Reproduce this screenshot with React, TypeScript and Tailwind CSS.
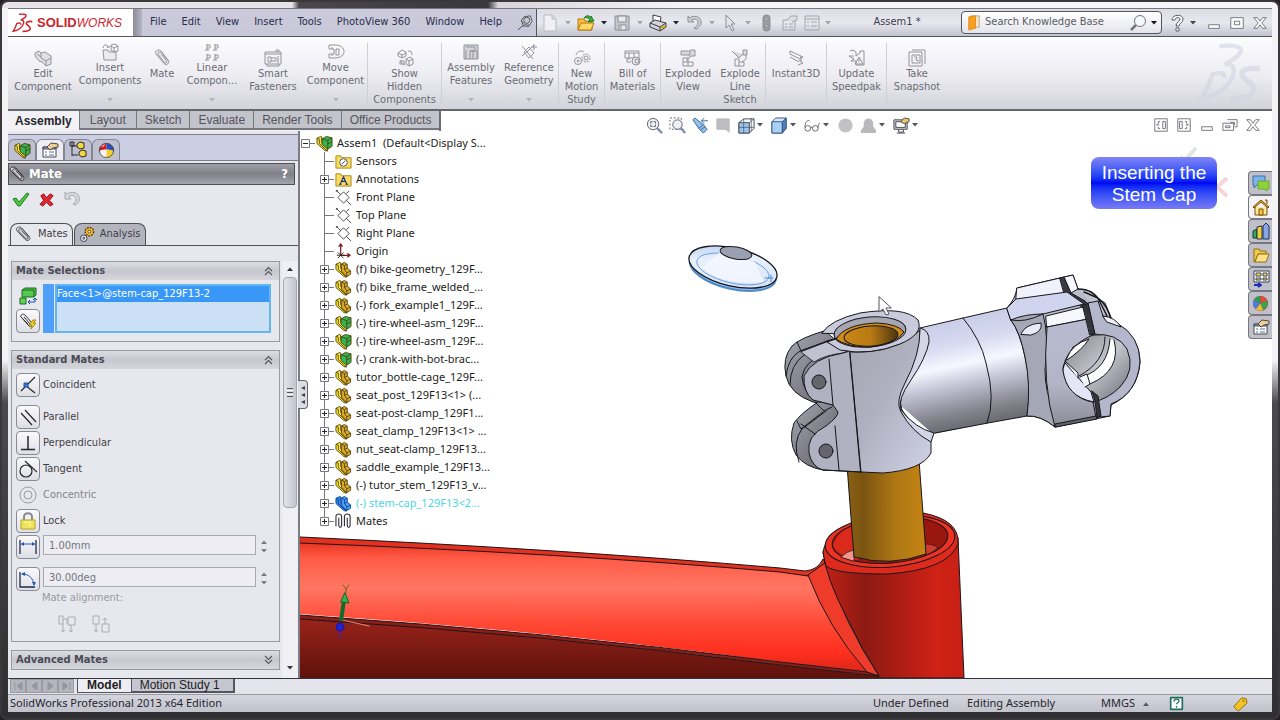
import type { ReactNode } from "react";

type IconProps = { size?: number; children: ReactNode; stroke?: string };

function Ico({ size = 18, stroke = "#8e8e96", children }: IconProps) {
    return (
        <svg width={size} height={size} viewBox="0 0 18 18" fill="none" stroke={stroke} strokeWidth="1" strokeLinejoin="round" aria-hidden="true" className="shrink-0">
            {children}
        </svg>
    );
}

function Caret({ color = "#555560" }: { color?: string }) {
    return (
        <svg width="6" height="4" viewBox="0 0 6 4" aria-hidden="true" className="shrink-0">
            <path d="M0 0h6L3 3.5z" fill={color} />
        </svg>
    );
}

function Clip({ size = 18, color = "#4b4b50" }: { size?: number; color?: string }) {
    return (
        <Ico size={size} stroke={color}>
            <path d="M2 5l9 9.500c2.500 2.500 6.500-.5 4-3.500L7 2C4.500-.5-.5 2.500 2 5z" fill="#d9d9de" />
            <path d="M15 11.500L7.500 3.500C5.500 2 2.500 4 4.500 6l7 7.500c1.500 1 3-.3 2-1.800L7 5" />
        </Ico>
    );
}

function PartIcon({ kind }: { kind: "part" | "asm" | "active" }) {
    const base = kind === "active" ? "#2f8bf2" : "#fbe63c";
    const block = kind === "asm" ? "#35b552" : kind === "active" ? "#4fa2fa" : "#dcab2e";
    const edge = kind === "active" ? "#0a3d8c" : "#4c3b05";
    return (
        <svg width="17" height="17" viewBox="0 0 18 18" fill="none" stroke={edge} strokeWidth=".9" strokeLinejoin="round" aria-hidden="true" className="shrink-0">
            <path d="M1 3.500L5 1.500l1 .5v6l6 6v3L9.500 16.500 1 9z" fill={base} />
            <path d="M1 3.500l2.500 1V9l8.500 8" />
            {kind === "asm" ? (
                <>
                    <path d="M6.500 4L11 1.500 17 3v9l-4.500 3L6.500 10z" fill={block} />
                    <path d="M6.500 4l6 2L17 3M12.500 6v9" />
                    <path d="M12.500 9.500L17 7" />
                </>
            ) : (
                <>
                    <path d="M7 3l3-1.500 3 2v4l3.500 3V14L12.500 16.500 7 11z" fill={block} />
                    <path d="M7 3l3 2 3-1.500M10 5v4l2.500 3.500 4-2M12.500 12.500v4M10 9l3-1.500" />
                </>
            )}
        </svg>
    );
}

function Sphere({ size = 17 }: { size?: number }) {
    return (
        <Ico size={size} stroke="none">
            <circle cx="9" cy="9" r="8" fill="#f5f5f7" />
            <path d="M9 8C4 8 2 9 1 10a8 8 0 0 1 8-9z" fill="#cf1f26" />
            <path d="M9 8V1a8 8 0 0 1 8 9c-2-1-4-2-8-2z" fill="#2c4fc0" />
            <path d="M9 8c4 0 6 1 8 2-1 5-4 7-8 7z" fill="#f0cf2e" />
            <path d="M3 5a8 8 0 0 1 5-3.500L6 5z" fill="#f2a9a0" />
            <circle cx="9" cy="9" r="7.500" stroke="#4b4b53" />
        </Ico>
    );
}

function PropertyIcon() {
    return (
        <Ico size={18} stroke="#4a4a52">
            <path d="M2 6h13v10H2z" fill="#fff" />
            <path d="M2 6h13v2H2z" fill="#7fa4dc" />
            <path d="M4 11h2M4 14h2M8 11h5M8 14h5" stroke="#55739e" />
            <path d="M6 6l4-4 7 1v3l-5 1-3 2z" fill="#f0cd92" />
        </Ico>
    );
}

/* ---------- title bar ---------- */

function DsMark({ className, color }: { className: string; color: string }) {
    return (
        <svg viewBox="0 0 60 56" fill="none" stroke={color} className={className} aria-hidden="true">
            <path d="M20 3c10-1 22-1 20 5-1 4-8 8-15 12 6-1 10 2 8 9-3 11-15 21-30 23 6-8 8-17 11-23 7-2 12-1 11 4" strokeWidth="4" />
            <path d="M58 24c-8-1-17 0-17 5 0 6 13 8 11 16-2 5-10 7-22 7" strokeWidth="5" />
        </svg>
    );
}

const menus = ["File", "Edit", "View", "Insert", "Tools", "PhotoView 360", "Window", "Help"];

const quickTools: { label: string; live?: boolean; icon: ReactNode }[] = [
    { label: "New", icon: <Ico stroke="#b9b9c2"><path d="M3 1h8l4 4v12H3zM11 1v4h4" fill="#f0f0f5" /></Ico> },
    {
        label: "Open",
        live: true,
        icon: (
            <Ico stroke="#b27a10">
                <path d="M1 5h6l1 2h7v9H1z" fill="#f6c03b" />
                <path d="M1 16l3-7h13l-3 7z" fill="#fbd867" />
                <path d="M7 4c3-4 6-2 7 0V2l3 5-6 1 2-2c-1-2-3-3-6-2z" fill="#3eae3a" stroke="#1f7a22" />
            </Ico>
        ),
    },
    { label: "Save", icon: <Ico><path d="M2 2h14v14H2z" fill="#c6c6cf" /><path d="M5 2h8v6H5zM6 11h7v5H6zM8 12v3" fill="#e9e9ef" /></Ico> },
    {
        label: "Print",
        live: true,
        icon: (
            <Ico stroke="#3d3d44">
                <path d="M4 1l8 2-1 6-7-2z" fill="#fff" />
                <path d="M1 9l5-3 11 3v4l-6 4-10-4z" fill="#d2d2da" />
                <path d="M1 9l10 4 6-4M11 13v4" />
                <path d="M12 14l4-2" stroke="#d9b400" strokeWidth="2" />
            </Ico>
        ),
    },
    { label: "Undo", icon: <Ico><path d="M3 2v6h6L6.500 6C10 4 14 6 13 9c0 2-2 4-4 5l2 1c4-2 6-5 5-8-1-5-8-6-11-3z" fill="#d0d0d8" /></Ico> },
    { label: "Select", icon: <Ico><path d="M5 1v13l3-3 3 6 2-1-3-6h4z" fill="#e5e5ec" /></Ico> },
];

const searchBook = (
    <Ico stroke="#9a5c08" size={17}>
        <path d="M5 2h9v12h-5" fill="#f4e6cd" stroke="#b9a57c" />
        <path d="M3 3l7-1v13l-7 2z" fill="#f7a021" stroke="#e08a12" />
    </Ico>
);

function WindowGlyph({ kind }: { kind: "min" | "max" | "restore" | "close" | "left" | "right" }) {
    return (
        <Ico size={16} stroke="#6a6a72">
            {kind === "min" && <path d="M3 11h12v4H3z" fill="#fff" />}
            {kind === "max" && <path d="M2 3h14v12H2zM6 7h6v4H6z" fill="#fff" />}
            {kind === "restore" && <path d="M6 3h11v8h-3M9 6h5v3M1 7h12v8H1zM4 10h5v2H4z" />}
            {kind === "close" && <path d="M2 3h4l3 4 3-4h4l-5 6 5 6h-4l-3-4-3 4H2l5-6z" fill="#fff" />}
            {kind === "left" && <path d="M2 2h14v14H2zM11 5h3v8h-3zM8 5H6v2M8 13H6v-2M4 9h3M4 9l2-2" />}
            {kind === "right" && <path d="M2 2h14v14H2zM4 5h3v8H4zM10 5h2v2M10 13h2v-2M11 9h3M14 9l-2-2" />}
        </Ico>
    );
}

function TitleBar() {
    return (
        <header className="flex h-[29px] shrink-0 items-stretch border-t border-b border-t-[#77777f] border-b-[#55555e] bg-linear-to-b from-[#dcdce6] via-[#e8e8f0] to-[#c4c4d0] text-[11px] text-[#3c3c48]">
            <div className="flex w-[125px] shrink-0 items-center gap-1 bg-white pl-1">
                <DsMark className="h-5 w-[21px]" color="#c9262d" />
                <div className="font-['Liberation_Sans',sans-serif] italic leading-none text-[#c9262d]">
                    <span className="text-[13px] font-bold not-italic">SOLID</span>
                    <span className="text-[12px]">WORKS</span>
                </div>
            </div>
            <div className="w-[9px] shrink-0 bg-linear-to-r from-[#8c8c9a] to-[#b5b5c4]" />
            <nav className="flex w-[395px] shrink-0 items-center gap-[15px] border-r border-[#55555e] bg-linear-to-b from-[#cbcbdb] to-[#c8c8da] pl-2 text-[#2b2b4b]">
                {menus.map((m) => (
                    <button key={m} type="button" className="whitespace-nowrap">
                        {m}
                    </button>
                ))}
                <button type="button" aria-label="Pin menu">
                    <Ico size={16} stroke="#45454d">
                        <path d="M8 2l7-1 2 6-4 6-6-1-2-6z" fill="#e4e4ec" />
                        <path d="M5 6c2 4 5 6 9 5M8 12l-3 1-4 4" />
                        <circle cx="11" cy="6" r="3.500" fill="#c7c7d3" />
                    </Ico>
                </button>
            </nav>
            <div className="flex shrink-0 items-center">
                {quickTools.map((t) => (
                    <button key={t.label} type="button" aria-label={t.label} className="flex w-9 items-center">
                        <span className="flex w-[26px] justify-center">{t.icon}</span>
                        <span className="flex w-[10px] justify-center">
                            <Caret color={t.live ? "#22222a" : "#a2a2ad"} />
                        </span>
                    </button>
                ))}
                <button type="button" aria-label="Rebuild" className="flex w-[26px] justify-center">
                    <Ico><rect x="6" y="1" width="7" height="16" rx="3" fill="#9b9ba6" /><circle cx="9.500" cy="5" r="1.500" fill="#c5c5cd" /><circle cx="9.500" cy="12" r="1.500" fill="#c5c5cd" /></Ico>
                </button>
                <button type="button" aria-label="File properties" className="flex w-[22px] justify-center">
                    <Ico stroke="#a4a4ae"><path d="M2 6h12v10H2zM4 10h2M4 13h2M8 10h4M8 13h4" /><path d="M6 6l4-4h6v4l-5 2" fill="#dcdce4" /></Ico>
                </button>
                <button type="button" aria-label="Options" className="flex w-8 items-center gap-1 pl-[2px]">
                    <Ico stroke="#a4a4ae"><path d="M2 2h14v14H2zM2 5h14M4 8h2M4 12h2M8 8h6M8 12h6" /></Ico>
                    <Caret color="#a2a2ad" />
                </button>
            </div>
            <h1 className="flex grow items-center justify-center">Assem1 *</h1>
            <div className="flex shrink-0 items-center">
                <div className="flex h-[23px] w-[201px] items-center rounded border border-[#55555e] bg-linear-to-b from-white to-[#e4e4ec] pl-1">
                    {searchBook}
                    <input
                        aria-label="Search Knowledge Base"
                        placeholder="Search Knowledge Base"
                        className="ml-[2px] min-w-0 grow bg-transparent outline-none placeholder:text-[#5b5b63]"
                    />
                    <button type="button" aria-label="Search" className="flex items-center gap-1 pr-1">
                        <Ico stroke="#74747e"><path d="M7 11l-5 5" strokeWidth="2.500" /><circle cx="11" cy="7" r="5.500" fill="#f4f8ff" /></Ico>
                        <Caret color="#111" />
                    </button>
                </div>
                <button type="button" aria-label="Help" className="ml-[6px] flex items-center gap-1">
                    <Ico stroke="#5a5a64"><path d="M4 6c0-6 11-6 11-1 0 4-4 4-4 7H8c0-4 4-4 4-7 0-2-5-2-5 1zM8 14h3v3H8z" fill="#fff" /></Ico>
                    <Caret color="#44444c" />
                </button>
                <div className="mr-1 ml-[10px] flex gap-[7px]">
                    <button type="button" aria-label="Minimize"><WindowGlyph kind="min" /></button>
                    <button type="button" aria-label="Maximize"><WindowGlyph kind="max" /></button>
                    <button type="button" aria-label="Close"><WindowGlyph kind="close" /></button>
                </div>
            </div>
        </header>
    );
}

/* ---------- command ribbon ---------- */

type Command = { lines: string[]; width: string; drop?: boolean; sep?: boolean; icon: ReactNode };

const commands: Command[] = [
    { lines: ["Edit", "Component"], width: "w-[70px]", icon: <><path d="M1 4l4-2 2 2 4-1 6 4v8l-5 2-4-4-3-1-4-5z" fill="#e0e0e4" /><path d="M7 4v5l5 3 5-3M12 12v5M3 5l4 3" /></> },
    { lines: ["Insert", "Components"], width: "w-16", drop: true, icon: <><path d="M2 7h5l1 2h7v8H3z" fill="#ececf0" /><path d="M2 5c0-4 5-4 5-1M6 3l1 2 2-2M10 2l4-1 3 2v5l-4 1-3-2zM10 3l3 2 4-2M13 5v4" /></> },
    { lines: ["Mate"], width: "w-10", icon: <><path d="M3 5l8 9.500c2.500 2.500 6.500-.5 4-3.500L8 2C5.500-.5.500 2.500 3 5z" fill="#ececf0" /><path d="M15 11.500L8.500 3.500C6.500 2 3.500 4 5.500 6l6 7.500c1.500 1 3-.3 2-1.800L8 5" /></> },
    { lines: ["Linear", "Compon..."], width: "w-[60px]", drop: true, icon: <path d="M4 1v6M4 11v6M12 1v6M12 11v6M4 2h3v3H4M12 2h3v3h-3M4 12h3v3H4M12 12h3v3h-3M2 7h4M10 7h4M2 17h4M10 17h4" /> },
    { lines: ["Smart", "Fasteners"], width: "w-[62px]", icon: <path d="M1 3h16v12H1zM1 5h16M4 8h3v5H4zM7 9h5v3H7M14 7v7M3 15v2h12v-2M12 3V1h3v2" /> },
    { lines: ["Move", "Component"], width: "w-16", drop: true, sep: true, icon: <path d="M2 2h6c12 0 12 13 0 13H2v-4h5V6H2zM9 6h3v6H9zM5 4v2M5 11v2" /> },
    { lines: ["Show", "Hidden", "Components"], width: "w-[74px]", sep: true, icon: <path d="M2 4l4-3 4 2v4L6 9 2 7zM2 4l4 2 4-2M6 6v3M10 10l4-2 3 2v5l-4 2-3-2zM10 10l3 2 4-2M13 12v5M12 2c3 0 4 1 4 4M5 11c0 3 1 4 4 5M4 12h4v3H4z" /> },
    { lines: ["Assembly", "Features"], width: "w-[58px]", drop: true, icon: <><path d="M2 2h14v14H2z" fill="#d5d5da" /><path d="M4 4h9v4H8v8M8 8h7v8M11 8v8M4 7v9" /></> },
    { lines: ["Reference", "Geometry"], width: "w-[59px]", drop: true, sep: true, icon: <path d="M2 3l11 13M2 13l7-6 5-5M4 9l5-5 5 6-5 5zM14 1v6M11 4h6" /> },
    { lines: ["New", "Motion", "Study"], width: "w-[46px]", sep: true, icon: <><circle cx="5" cy="12" r="3.500" /><circle cx="5" cy="12" r="1" /><circle cx="13" cy="9" r="4" strokeDasharray="2 1" /><circle cx="13" cy="9" r="2" /><path d="M3 6c1-4 6-5 8-3" /></> },
    { lines: ["Bill of", "Materials"], width: "w-14", sep: true, icon: <><path d="M1 2h14v7H1zM1 4h14M5 4v7M10 4v5M3 9v4h4" /><circle cx="12" cy="12" r="4" fill="#e6e6ea" /><circle cx="13" cy="12" r="2" /></> },
    { lines: ["Exploded", "View"], width: "w-[54px]", icon: <><path d="M2 2h9v4H2zM11 1h5v6h-4l-5 5" fill="#dadade" /><path d="M4 16V9h5v4h5v4H4zM4 13h5v4" /></> },
    { lines: ["Explode", "Line", "Sketch"], width: "w-[51px]", sep: true, icon: <><path d="M1 2l7 7 4-4M12 1h4v5h-4z" fill="#dadade" /><path d="M4 16v-6h4v3h5v4H4zM8 13v4M15 6v4l-4 3" /></> },
    { lines: ["Instant3D"], width: "w-[61px]", sep: true, icon: <path d="M3 2l11 5v3l2-3M3 2v3l10 5M3 8l9 5M12 11l4 3-5 2M14 7v6" /> },
    { lines: ["Update", "Speedpak"], width: "w-[60px]", sep: true, icon: <path d="M2 2l3-1 3 2v4l4-3V2h4v14H8v-4H3l3-2-5-3h5M11 8l4 7H7zM11 10v3" /> },
    { lines: ["Take", "Snapshot"], width: "w-[60px]", icon: <path d="M4 1h13v14M1 3h13v14H1zM4 6h8v8H4zM6 8h3l-1 3 3 1" /> },
];

function Ribbon() {
    return (
        <div className="flex h-[74px] shrink-0 items-stretch overflow-hidden border-b-2 border-[#66666c] bg-linear-to-b from-[#fdfdff] via-[#eeeef3] to-[#d3d3db] py-[6px] text-[11px] leading-[13px] text-[#6c6c74]">
            {commands.map((c) => (
                <button
                    key={c.lines.join(" ")}
                    type="button"
                    className={`${c.width} flex shrink-0 flex-col items-center ${c.drop ? "" : "pt-[6px]"} ${c.sep ? "border-r border-[#cfcfd6]" : ""}`}
                >
                    <Ico stroke="#92929a">{c.icon}</Ico>
                    {c.lines.map((line) => (
                        <span key={line} className="whitespace-nowrap">{line}</span>
                    ))}
                    {c.drop && (
                        <span className="mt-[11px]">
                            <Caret color="#b4b4bc" />
                        </span>
                    )}
                </button>
            ))}
            <DsMark className="my-auto mr-2 ml-auto h-15 w-[68px] opacity-60" color="#d3d4e2" />
        </div>
    );
}

/* ---------- tabs and heads-up view toolbar ---------- */

const commandTabs = ["Layout", "Sketch", "Evaluate", "Render Tools", "Office Products"];

const viewTools: { label: string; width: string; caret?: boolean; icon: ReactNode }[] = [
    { label: "Zoom to fit", width: "w-[23px]", icon: <Ico size={17} stroke="#5d6068"><circle cx="7.500" cy="7.500" r="6" fill="#eef1f6" /><path d="M5 7V5h2M8 5h2v2M10 8v2H8M7 10H5V8" /><path d="M12 12l5 5" stroke="#7a8fb0" strokeWidth="2.500" /></Ico> },
    { label: "Zoom to area", width: "w-[23px]", icon: <Ico size={17} stroke="#5d6068"><path d="M1 1h12v12H1z" strokeDasharray="2 2" /><circle cx="9" cy="8" r="5" fill="#eef1f6" /><path d="M13 12l4 5" stroke="#7a8fb0" strokeWidth="2.500" /></Ico> },
    { label: "Previous view", width: "w-[23px]", icon: <Ico size={17} stroke="#3d6690"><path d="M1 3l2-2 9 7 4 5-4 4-5-5z" fill="#8fc0ea" /><path d="M7 12l5-4M9 14l5-4M17 4h-7M10 4l3-3M10 4l3 3" /></Ico> },
    { label: "Section view", width: "w-[23px]", icon: <Ico size={17} stroke="#b8b8bc"><path d="M2 2h13v14l-4-3H2z" fill="#bdbdc1" /></Ico> },
    { label: "View orientation", width: "w-[33px]", caret: true, icon: <Ico size={17} stroke="#454a55"><path d="M1 6l5-4h11v10l-5 5H1z" fill="#f5f8fd" /><path d="M1 6h11v11H1z" fill="#9ac4ee" /><path d="M12 6l5-4M6 2v4M1 11h16M6 6v11M14 1v14" strokeWidth=".7" /></Ico> },
    { label: "Display style", width: "w-[33px]", caret: true, icon: <Ico size={17} stroke="#3b577c"><path d="M1 5l4-4h11v11l-4 5H1z" fill="#d5e6f7" /><path d="M1 5h11v12H1z" fill="#a9d0f5" /><path d="M12 5l4-4v11l-4 5z" fill="#4a81c0" /></Ico> },
    { label: "Hide/show items", width: "w-[33px]", caret: true, icon: <Ico size={17} stroke="#66666c"><circle cx="4" cy="12" r="3" /><circle cx="12" cy="12" r="3" /><path d="M7 12c1-2 2-2 2 0M1 11C1 6 3 3 6 4M15 11c0-3 1-4 2-5" /></Ico> },
    { label: "Edit appearance", width: "w-[23px]", icon: <Ico size={17} stroke="none"><circle cx="9" cy="9" r="7.500" fill="#c2c2c5" /></Ico> },
    { label: "Apply scene", width: "w-[33px]", caret: true, icon: <Ico size={17} stroke="none"><path d="M1 14l3-4V6c1-6 9-6 10 0v4l3 4v3H1z" fill="#b9b9bc" /></Ico> },
    { label: "View settings", width: "w-[33px]", caret: true, icon: <Ico size={17} stroke="#45454d"><path d="M1 3h14v10H1z" fill="#cfd4dc" /><path d="M3 5h10v6H3z" fill="#fff" /><path d="M6 13v3h5v-3M4 17h9" /><path d="M8 5l4-4 5 1v3l-5 2z" fill="#ecc56a" /></Ico> },
];

function TabRow() {
    return (
        <div className="relative z-10 flex h-5 shrink-0 items-start font-['Liberation_Sans',sans-serif] text-[12px] text-[#55555e]">
            <div role="tablist" className="flex items-start border-r-2 border-[#6b6b73]">
                <button type="button" role="tab" aria-selected="true" className="h-5 bg-[#f1f1f6] px-[7px] font-bold text-[#26262b]">
                    Assembly
                </button>
                {commandTabs.map((t) => (
                    <button key={t} type="button" role="tab" aria-selected="false" className="h-[19px] border-b-2 border-l border-[#77777f] bg-[#c3c3cb] px-2 whitespace-nowrap nth-2:px-[10px]">
                        {t}
                    </button>
                ))}
            </div>
            <div className="flex h-7 grow items-center justify-between bg-white pl-[202px]">
                <div className="flex items-center">
                    {viewTools.map((t) => (
                        <button key={t.label} type="button" aria-label={t.label} className={`${t.width} flex items-center gap-[2px] pl-[3px]`}>
                            {t.icon}
                            {t.caret && <Caret />}
                        </button>
                    ))}
                </div>
                <div className="mr-[11px] flex gap-[7px]">
                    <button type="button" aria-label="Dock left"><WindowGlyph kind="left" /></button>
                    <button type="button" aria-label="Dock right"><WindowGlyph kind="right" /></button>
                    <button type="button" aria-label="Minimize document"><WindowGlyph kind="min" /></button>
                    <button type="button" aria-label="Restore document"><WindowGlyph kind="restore" /></button>
                    <button type="button" aria-label="Close document"><WindowGlyph kind="close" /></button>
                </div>
            </div>
        </div>
    );
}

/* ---------- property manager ---------- */

const managerTabs: { label: string; icon: ReactNode }[] = [
    { label: "Feature tree", icon: <PartIcon kind="asm" /> },
    { label: "Property manager", icon: <PropertyIcon /> },
    {
        label: "Configuration manager",
        icon: (
            <Ico stroke="#2b2b30">
                <path d="M3 1v14M3 5h5M3 14h6M1 1h4v4H1z" />
                <path d="M8 3l3-2 4 1v5l-4 1-3-2zM10 11l3-2 4 1v5l-4 1-3-2z" fill="#f3d93a" />
            </Ico>
        ),
    },
    { label: "Display manager", icon: <Sphere /> },
];

function Chevrons({ down }: { down?: boolean }) {
    return (
        <svg width="9" height="10" viewBox="0 0 9 10" fill="none" stroke="#55555d" strokeWidth="1.100" aria-hidden="true">
            {down ? <path d="M1 1l3.500 3.500L8 1M1 5l3.500 3.500L8 5" /> : <path d="M1 5l3.500-3.500L8 5M1 9l3.500-3.500L8 9" />}
        </svg>
    );
}

function Group({ title, closed, children }: { title: string; closed?: boolean; children?: ReactNode }) {
    return (
        <section className="border border-[#9a9aa3]">
            <button
                type="button"
                aria-expanded={!closed}
                className="flex h-[18px] w-full items-center justify-between bg-linear-to-b from-[#dcdce3] via-[#c7c7cf] to-[#d6d6dd] pr-[6px] pl-1 text-[11px] font-bold text-[#4b4b53]"
            >
                {title}
                <Chevrons down={closed} />
            </button>
            {children}
        </section>
    );
}

function Framed({ children }: { children: ReactNode }) {
    return (
        <span className="flex size-6 shrink-0 items-center justify-center rounded border border-[#8a8a94] bg-linear-to-b from-[#fafafc] to-[#dedee6]">
            {children}
        </span>
    );
}

const mates: { label: string; gap: string; icon: ReactNode }[] = [
    { label: "Coincident", gap: "mb-2", icon: <><path d="M16 1L2 15M6 9l10 8" strokeWidth="1.200" /><path d="M5 7h4v4H5z" fill="#3d7ad8" stroke="#1d4f9f" /></> },
    { label: "Parallel", gap: "mb-[2px]", icon: <path d="M2 5l11 12M6 2l11 12" strokeWidth="1.200" /> },
    { label: "Perpendicular", gap: "mb-[2px]", icon: <path d="M9 2v13M2 15.500h14" strokeWidth="1.500" /> },
    { label: "Tangent", gap: "mb-[2px]", icon: <><circle cx="7" cy="11" r="6" strokeWidth="1.200" /><path d="M6 1l12 11" strokeWidth="1.200" /></> },
    { label: "Concentric", gap: "mb-[2px]", icon: <><circle cx="9" cy="9" r="8" /><circle cx="9" cy="9" r="4" /></> },
    { label: "Lock", gap: "mb-[2px]", icon: <><path d="M5 8V5c0-5 8-5 8 0v3" stroke="#8a8a92" strokeWidth="2" /><path d="M2 8h14v9H2z" fill="#efe35a" stroke="#b5a72a" /><path d="M5 10h6v5" stroke="#fff8b0" /></> },
];

function Spinner() {
    return (
        <span className="flex flex-col gap-[5px] pt-[5px] pl-[5px]">
            <button type="button" aria-label="Increase" className="rotate-180"><Caret color="#7d7d86" /></button>
            <button type="button" aria-label="Decrease"><Caret color="#7d7d86" /></button>
        </span>
    );
}

function ValueRow({ label, value, icon, gap }: { label: string; value: string; icon: ReactNode; gap: string }) {
    return (
        <div className={`flex items-start ${gap}`}>
            <Framed><Ico stroke="#1f2b4d">{icon}</Ico></Framed>
            <input
                aria-label={label}
                defaultValue={value}
                className="ml-[3px] h-5 min-w-0 grow border border-[#a9a9b3] bg-[#ededf3] px-[5px] text-[#74747c] outline-none"
            />
            <Spinner />
        </div>
    );
}

function PropertyPanel() {
    return (
        <aside className="relative flex w-[292px] shrink-0 flex-col border-r-2 border-[#7c7c85] bg-[#e7e7ee] text-[11px] text-[#3f3f47]">
            <div className="mt-[3px] flex h-[27px] shrink-0 items-end border-t border-b border-[#7c7c85] bg-[#cccfe4]">
                {managerTabs.map((t, i) => (
                    <button
                        key={t.label}
                        type="button"
                        aria-label={t.label}
                        className={`flex h-[21px] w-7 items-center justify-center rounded-t-md border border-b-0 border-[#85858f] ${i === 1 ? "bg-[#ededf3]" : "bg-[#bfc1d2]"}`}
                    >
                        {t.icon}
                    </button>
                ))}
            </div>
            <div className="mt-[2px] mr-[3px] flex h-[22px] shrink-0 items-center border border-[#4f4f57] bg-linear-to-b from-[#a0a0a8] via-[#808089] to-[#a5a5ad] text-white">
                <Clip size={17} color="#26262b" />
                <h2 className="ml-[3px] grow text-[13px] font-bold">Mate</h2>
                <button type="button" aria-label="Help on mates" className="mr-[6px] text-[13px] font-bold">?</button>
            </div>
            <div className="mt-[5px] ml-1 flex gap-2">
                <button type="button" aria-label="OK">
                    <Ico stroke="#1d7a1d"><path d="M1 9l3-1 3 4 8-9 2 1L8 16H6z" fill="#4fc63f" /></Ico>
                </button>
                <button type="button" aria-label="Cancel">
                    <Ico size={17} stroke="#8f1118"><path d="M3 5l3-2 3 4 4-4 3 2-4 5 4 4-3 2-4-4-4 4-3-2 4-4z" fill="#e02631" /></Ico>
                </button>
                <button type="button" aria-label="Undo mate">
                    <Ico stroke="#a8a8b0"><path d="M2 2v7h6L5.500 6.500C9 4 14 6 13 10c0 2-1 3-3 4l2 1c4-2 5-5 4-8-1-5-8-6-12-3z" fill="#d8d8df" /></Ico>
                </button>
            </div>
            <div role="tablist" className="mt-[15px] flex shrink-0 border-b border-[#4f4f57] pl-[2px]">
                <button type="button" role="tab" aria-selected="true" className="flex h-[22px] items-center gap-[6px] rounded-t-lg border border-b-0 border-[#4f4f57] pr-1 pl-1">
                    <Clip size={17} />
                    Mates
                </button>
                <button type="button" role="tab" aria-selected="false" className="ml-px flex h-[22px] items-center gap-1 rounded-t-lg border border-b-0 border-[#4f4f57] bg-[#b4b4be] pr-1 pl-1">
                    <Ico stroke="#5a4508" size={17}>
                        <circle cx="11" cy="6" r="4.500" fill="#f2b632" strokeWidth="1.500" strokeDasharray="2 1" />
                        <circle cx="5" cy="13" r="3.500" fill="#d5def0" stroke="#39425c" />
                        <circle cx="11" cy="6" r="1.500" fill="#fff" /><circle cx="5" cy="13" r="1" />
                    </Ico>
                    Analysis
                </button>
            </div>
            <div className="flex min-h-0 grow pt-[15px]">
                <div className="flex min-w-0 grow flex-col gap-2 pl-[3px]">
                    <Group title="Mate Selections">
                        <div className="flex gap-[3px] px-1 pt-1 pb-2">
                            <div className="flex flex-col gap-px">
                                <span className="flex size-6 items-center justify-center">
                                    <Ico stroke="#166a20">
                                        <path d="M3 3l3-2h11v7l-2 2H3z" fill="#54c94f" />
                                        <path d="M1 11h6v6H1z" fill="#62d057" />
                                        <path d="M3 3h12v7" />
                                        <path d="M9 15h7v-4M9 15l2-2M9 15l2 2M16 11l-2 2M16 11l2 2" stroke="#1c4ea8" />
                                    </Ico>
                                </span>
                                <button type="button" aria-label="Multiple mate mode">
                                    <Framed>
                                        <Ico stroke="#33333a"><path d="M2 5l8 9c2 1 4 0 3-3L6 3C4 1 1 3 2 5l7 7M5 5l6 7" /><path d="M14 8l-4 5h3l-1 4 5-6h-3l3-3z" fill="#f6d62a" stroke="#a98b05" /></Ico>
                                    </Framed>
                                </button>
                            </div>
                            <div className="flex grow gap-px pr-1">
                                <div className="w-[11px] bg-[#4fa0fb]" />
                                <div className="h-[49px] grow border-2 border-[#63b5ee] bg-[#cbe0f5]">
                                    <div className="h-4 bg-[#3897f7] leading-4 text-white">Face&lt;1&gt;@stem-cap_129F13-2</div>
                                </div>
                            </div>
                        </div>
                    </Group>
                    <Group title="Standard Mates">
                        <div className="px-1 pt-1 pb-2">
                            {mates.map((m) => {
                                const off = m.label === "Concentric";
                                const glyph = <Ico stroke={off ? "#9b9ba3" : "#26262b"}>{m.icon}</Ico>;
                                return (
                                    <button key={m.label} type="button" disabled={off} className={`flex items-center gap-[3px] ${m.gap} ${off ? "text-[#85858d]" : ""}`}>
                                        {off ? <span className="flex size-6 items-center justify-center">{glyph}</span> : <Framed>{glyph}</Framed>}
                                        {m.label}
                                    </button>
                                );
                            })}
                            <ValueRow label="Distance" value="1.00mm" gap="mb-2 pr-2" icon={<><path d="M1 2v14M17 2v14" strokeWidth="1.300" /><path d="M2 6h14" stroke="#2458b8" /><path d="M2 6l3-2v4zM16 6l-3-2v4z" fill="#2458b8" stroke="none" /></>} />
                            <ValueRow label="Angle" value="30.00deg" gap="pr-2" icon={<><path d="M1 2v15h15" strokeWidth="1.300" /><path d="M3 4c7 0 11 4 12 11" stroke="#2458b8" /><path d="M2 4l4-2v4zM15 16l-2-4h4z" fill="#2458b8" stroke="none" /></>} />
                            <p className="pl-[26px] leading-[14px] text-[#9a9aa2]">Mate alignment:</p>
                            <div className="mt-[10px] flex gap-4 pl-[42px]">
                                <button type="button" disabled aria-label="Aligned">
                                    <Ico stroke="#acacb4"><path d="M1 1h4v8H1zM5 4h4v5M10 2h7v8h-7zM5 9v8M3 15l2 2 2-2M13 10v7M11 15l2 2 2-2" /></Ico>
                                </button>
                                <button type="button" disabled aria-label="Anti-aligned">
                                    <Ico stroke="#acacb4"><path d="M1 1h6v8H1zM4 9v8M2 15l2 2 2-2M10 9h7v8h-7zM13 9V3M11 5l2-2 2 2" /></Ico>
                                </button>
                            </div>
                        </div>
                    </Group>
                    <Group title="Advanced Mates" closed />
                </div>
                <div className="ml-[2px] flex w-4 shrink-0 flex-col items-center bg-[#efeff4]">
                    <span className="my-[6px] rotate-180"><Caret color="#33333a" /></span>
                    <div className="flex h-[231px] w-[14px] flex-col items-center justify-center gap-px rounded-sm border border-[#a5a5ae] bg-linear-to-r from-[#e3e3ea] to-[#c5c5ce]">
                        <span className="h-px w-[6px] bg-[#55555e]" />
                        <span className="h-px w-[6px] bg-white" />
                        <span className="h-px w-[6px] bg-[#55555e]" />
                        <span className="h-px w-[6px] bg-white" />
                        <span className="h-px w-[6px] bg-[#55555e]" />
                    </div>
                    <span className="mt-auto mb-2"><Caret color="#33333a" /></span>
                </div>
            </div>
            <button
                type="button"
                aria-label="Collapse panel"
                className="absolute top-[249px] left-[290px] z-10 flex h-[29px] w-[10px] flex-col items-center justify-center gap-[3px] rounded-r border border-l-0 border-[#66666f] bg-[#dcdce4]"
            >
                <span className="size-0 border-y-2 border-r-4 border-y-transparent border-r-[#44444c]" />
                <span className="size-0 border-y-2 border-r-4 border-y-transparent border-r-[#44444c]" />
                <span className="size-0 border-y-2 border-r-4 border-y-transparent border-r-[#44444c]" />
            </button>
        </aside>
    );
}

/* ---------- feature tree ---------- */

type NodeKind = "sensor" | "note" | "plane" | "origin" | "part" | "asm" | "active" | "mates";

const nodes: { label: string; kind: NodeKind }[] = [
    { label: "Sensors", kind: "sensor" },
    { label: "Annotations", kind: "note" },
    { label: "Front Plane", kind: "plane" },
    { label: "Top Plane", kind: "plane" },
    { label: "Right Plane", kind: "plane" },
    { label: "Origin", kind: "origin" },
    { label: "(f) bike-geometry_129F...", kind: "part" },
    { label: "(f) bike_frame_welded_...", kind: "part" },
    { label: "(-) fork_example1_129F...", kind: "part" },
    { label: "(-) tire-wheel-asm_129F...", kind: "asm" },
    { label: "(-) tire-wheel-asm_129F...", kind: "asm" },
    { label: "(-) crank-with-bot-brac...", kind: "asm" },
    { label: "tutor_bottle-cage_129F...", kind: "part" },
    { label: "seat_post_129F13<1> (...", kind: "part" },
    { label: "seat-post-clamp_129F1...", kind: "part" },
    { label: "seat_clamp_129F13<1> ...", kind: "part" },
    { label: "nut_seat-clamp_129F13...", kind: "part" },
    { label: "saddle_example_129F13...", kind: "part" },
    { label: "(-) tutor_stem_129F13_v...", kind: "part" },
    { label: "(-) stem-cap_129F13<2...", kind: "active" },
    { label: "Mates", kind: "mates" },
];

function NodeIcon({ kind }: { kind: NodeKind }) {
    switch (kind) {
        case "sensor":
            return (
                <Ico size={17} stroke="#a98412">
                    <path d="M1 3h5l1 2h10v11H1z" fill="#f8dc62" />
                    <circle cx="9" cy="10" r="4" fill="#fff" stroke="#4a5570" />
                    <path d="M7 12l4-4" stroke="#2a3d70" />
                </Ico>
            );
        case "note":
            return (
                <Ico size={17} stroke="#a98412">
                    <path d="M1 3h5l1 2h10v11H1z" fill="#f8dc62" />
                    <path d="M5.500 14L9 6l3.500 8M7 11h4M4 14h3M11 14h3" stroke="#1f2f80" strokeWidth="1.200" />
                </Ico>
            );
        case "plane":
            return <Ico size={17} stroke="#33333a"><path d="M9 3l6 6-6 6-6-6zM1 1l5 5M12 12l5 5M3 1L1 3M15 2l-3 3" strokeWidth=".9" /></Ico>;
        case "origin":
            return (
                <Ico size={17} stroke="#7c1b1b">
                    <path d="M6 13V2M4 4l2-3 2 3M6 13h9M13 11l3 2-3 2" strokeWidth="1.300" />
                    <path d="M3 10l6 6M9 10l-6 6M2 13h8" stroke="#26262b" />
                </Ico>
            );
        case "mates":
            return (
                <Ico size={17} stroke="#33333a">
                    <path d="M1 14V4c0-4 6-4 6 0v9c0 3-3 3-3 0V5M10 14V4c0-4 6-4 6 0v9c0 3-3 3-3 0V5" strokeWidth="1.200" />
                </Ico>
            );
        default:
            return <PartIcon kind={kind} />;
    }
}

function Toggle({ open }: { open?: boolean }) {
    return (
        <button type="button" aria-label={open ? "Collapse" : "Expand"} className="relative flex bg-white">
            <svg width="9" height="9" viewBox="0 0 9 9" fill="none" aria-hidden="true">
                <path d="M.5.5h8v8h-8z" stroke="#77777f" />
                <path d={open ? "M2 4.500h5" : "M2 4.500h5M4.500 2v5"} stroke="#26262b" />
            </svg>
        </button>
    );
}

function FeatureTree() {
    return (
        <div className="relative w-[200px] pt-[3px] font-['Noto_Sans',sans-serif] text-[11px] text-[#1d1d22]">
            <div className="flex h-[18px] items-center">
                <span className="ml-px"><Toggle open /></span>
                <span className="mr-px h-px w-[5px] bg-[#77777f]" />
                <PartIcon kind="asm" />
                <span className="ml-1 whitespace-pre">Assem1  (Default&lt;Display S...</span>
            </div>
            <ul className="relative ml-5">
                <li aria-hidden="true" className="absolute top-0 bottom-[9px] left-[4px] w-px bg-[#77777f]" />
                {nodes.map((n, i) => {
                    const leaf = n.kind === "sensor" || n.kind === "plane" || n.kind === "origin";
                    return (
                        <li key={i} className="flex h-[18px] items-center">
                            <span className="w-[9px]">{!leaf && <Toggle />}</span>
                            <span className={leaf ? "mr-px -ml-1 h-px w-[9px] bg-[#77777f]" : "mr-px h-px w-[5px] bg-[#77777f]"} />
                            <NodeIcon kind={n.kind} />
                            <span className={`ml-1 whitespace-nowrap ${n.kind === "active" ? "text-[#4fd6e4]" : ""}`}>{n.label}</span>
                        </li>
                    );
                })}
            </ul>
        </div>
    );
}

/* ---------- 3D model ---------- */

function ModelScene() {
    return (
        <svg viewBox="300 131 972 547" preserveAspectRatio="xMinYMin slice" className="absolute inset-0 size-full" aria-label="Stem assembly model" fill="none" stroke="#17171c" strokeLinejoin="round" strokeLinecap="round">
            <defs>
                <linearGradient id="tubeRed" x1="0" y1="0" x2="0" y2="1">
                    <stop offset="0" stopColor="#e8321f" />
                    <stop offset=".12" stopColor="#ff5a45" />
                    <stop offset=".35" stopColor="#ff7663" />
                    <stop offset=".62" stopColor="#ff4a36" />
                    <stop offset=".85" stopColor="#ff2f1e" />
                    <stop offset="1" stopColor="#d9261a" />
                </linearGradient>
                <linearGradient id="tubeDark" x1="0" y1="0" x2="0" y2="1">
                    <stop offset="0" stopColor="#99231a" />
                    <stop offset="1" stopColor="#5e120c" />
                </linearGradient>
                <linearGradient id="headRed" x1="0" y1="0" x2="1" y2="0">
                    <stop offset="0" stopColor="#c02116" />
                    <stop offset=".3" stopColor="#8c1a13" />
                    <stop offset=".55" stopColor="#ad1d14" />
                    <stop offset=".8" stopColor="#d02216" />
                    <stop offset="1" stopColor="#c81f14" />
                </linearGradient>
                <linearGradient id="gold" x1="0" y1="0" x2="1" y2="0">
                    <stop offset="0" stopColor="#8a6013" />
                    <stop offset=".2" stopColor="#7a5411" />
                    <stop offset=".6" stopColor="#ad7614" />
                    <stop offset="1" stopColor="#c58413" />
                </linearGradient>
                <linearGradient id="goldHole" x1="0" y1="0" x2="1" y2="0">
                    <stop offset="0" stopColor="#c98615" />
                    <stop offset=".5" stopColor="#b97a14" />
                    <stop offset="1" stopColor="#4a3510" />
                </linearGradient>
                <linearGradient id="clamp" x1="0" y1="0" x2="1" y2="1">
                    <stop offset="0" stopColor="#a5a6b2" />
                    <stop offset=".45" stopColor="#b0b1c0" />
                    <stop offset="1" stopColor="#cfd1e6" />
                </linearGradient>
                <linearGradient id="stem" x1=".35" y1="0" x2=".6" y2="1">
                    <stop offset="0" stopColor="#bfc3e0" />
                    <stop offset=".3" stopColor="#d6d9f0" />
                    <stop offset=".46" stopColor="#f6f8ff" />
                    <stop offset=".6" stopColor="#c3c4d6" />
                    <stop offset=".8" stopColor="#84848d" />
                    <stop offset="1" stopColor="#55555c" />
                </linearGradient>
                <linearGradient id="ear" x1="0" y1="0" x2="1" y2="1">
                    <stop offset="0" stopColor="#a5a6b2" />
                    <stop offset=".6" stopColor="#777780" />
                    <stop offset="1" stopColor="#5a5a62" />
                </linearGradient>
                <linearGradient id="face" x1="0" y1="0" x2="1" y2="1">
                    <stop offset="0" stopColor="#cfd1e2" />
                    <stop offset="1" stopColor="#8f909d" />
                </linearGradient>
                <linearGradient id="plate" x1="0" y1="0" x2="0" y2="1">
                    <stop offset="0" stopColor="#b8bbd0" />
                    <stop offset=".6" stopColor="#b3b4c6" />
                    <stop offset="1" stopColor="#8c8c97" />
                </linearGradient>
                <linearGradient id="bore" x1="0" y1="0" x2="1" y2="1">
                    <stop offset="0" stopColor="#7f7f88" />
                    <stop offset=".5" stopColor="#c4c4cc" />
                    <stop offset="1" stopColor="#6b6b73" />
                </linearGradient>
                <linearGradient id="cap" x1="0" y1="0" x2=".7" y2="1">
                    <stop offset="0" stopColor="#a9c6ef" />
                    <stop offset=".4" stopColor="#e9f0fc" />
                    <stop offset="1" stopColor="#d5e4fa" />
                </linearGradient>
            </defs>

            {/* frame tube */}
            <path d="M300 542Q560 551 780 571L808 575Q830 630 868 672L780 662Q540 630 300 614z" fill="url(#tubeRed)" stroke="none" />
            <path d="M300 537Q560 549 780 568L805 571Q818 570 823 559L827 566 808 576 780 572Q560 553 300 543z" fill="#e3301f" />
            <path d="M300 618Q540 634 780 665L879 676 879 678H300z" fill="url(#tubeDark)" stroke="none" />
            <path d="M300 615Q540 631 780 662L868 672 879 676 780 665Q540 634 300 619" fill="#8e1d15" />
            <path d="M808 575L825 563Q845 625 879 676L867 672Q828 628 808 575z" fill="#ef3b2a" />

            {/* head tube */}
            <path d="M823 552Q826 578 847 618 862 650 879 676L878 678H964L958 538Z" fill="url(#headRed)" />
            <path d="M823 552Q825 540 835 532 870 512 923 513 960 520 958 544 948 570 887 574 834 574 826 566z" fill="#dd2a1c" />
            <ellipse cx="890" cy="541" rx="65" ry="26" transform="rotate(-5 890 541)" fill="#ec3223" />
            <ellipse cx="890" cy="540" rx="58" ry="23" transform="rotate(-5 890 540)" fill="#9a170f" />
            <path d="M833 545Q838 530 856 525L858 560Q836 556 833 545z" fill="#d92a1c" stroke="none" />
            <path d="M841 557q6-6 13-7v11z" fill="#f2958a" strokeWidth=".7" />
            <path d="M926 544q8 0 12 4-6 5-12 7z" fill="#d23a2b" strokeWidth=".7" />

            {/* steerer */}
            <path d="M847 465L854 557Q890 567 926 554L919 460z" fill="url(#gold)" />

            {/* stem tube */}
            <path d="M915 330L963 318 1007 308 1050 300 1060 420 1027 416 988 423 933 434 900 405z" fill="url(#stem)" stroke="none" />
            <path d="M920 328L963 318 1007 308M935 433L988 423 1027 416" />
            <path d="M963 318Q981 340 986 363 996 400 987 423" />

            {/* bar clamp */}
            <path d="M1007 308Q1016 298 1017 288L1060 278 1073 275 1078 289 1088 292 1105 303 1113 322Q1140 336 1140 362 1138 392 1111 405L1110 416 1055 427Q1040 415 1027 416 1032 385 1025 357 1020 332 1011 320z" fill="url(#face)" />
            <path d="M1017 288L1060 278 1067 293 1016 301z" fill="#f0f1fa" />
            <path d="M1064 277L1073 275 1078 289 1071 293z" fill="#f6f7fd" />
            <path d="M1060 278l4-1 7 16 14 8 5 6-5 2-12-8-9-8z" fill="#3a3a42" />
            <path d="M1007 308L1016 299 1067 292 1084 304 1043 314 1011 320z" fill="#d0d4ee" />
            <path d="M1078 289q16 0 22 13l8 16M1084 292l14 6q10 8 13 22" fill="#c4c4ce" strokeWidth="1.500" />
            <path d="M1011 320Q1024 314 1043 314 1049 335 1045 370 1045 390 1053 410L1055 427Q1040 415 1027 416 1031 385 1025 357 1020 332 1011 320z" fill="#a6a7b6" />
            <path d="M1011 320q14 3 32-6" />
            <path d="M1021 334q4-10 20-11 2 9-10 12z" fill="#e9ebf8" />
            <path d="M1046 316L1083 307 1088 319 1047 327z" fill="#f7f8fe" />
            <path d="M1047 327L1088 319 1093 336 1073 347 1063 367 1067 384 1093 402 1096 418 1055 427Q1042 385 1047 327z" fill="url(#plate)" />
            <path d="M1088 303L1098 301 1103 316 1117 323Q1140 336 1140 362 1137 394 1111 404L1110 416 1100 417 1098 402 1093 390Q1133 380 1129 357 1122 336 1095 334z" fill="#b4b6cb" />
            <path d="M1083 306l5-3 7 31-5 1z" fill="#34343b" />
            <path d="M1103 316q12 1 18 11l-14-5z" fill="#f0f1fa" />

            {/* bar clamp bore */}
            <path d="M1093 335Q1117 332 1127 349 1136 370 1120 387 1108 399 1093 402 1068 398 1063 370 1066 346 1093 335z" fill="url(#bore)" />
            <path d="M1067 358Q1072 344 1089 339 1082 350 1067 360z" fill="#fff" />
            <path d="M1114 340Q1122 370 1090 384L1084 376Q1108 368 1110 339" fill="#fff" />
            <path d="M1105 337Q1105 362 1079 376M1095 337" />
            <path d="M1065 363L1091 392 1094 402Q1066 397 1063 370z" fill="#e3e6f6" />
            <path d="M1065 361l13 12v5M1080 377l7-3 3 10-5 3" fill="#f7f8fe" />
            <path d="M1092 391l6 5 3 20-4 2-2-17z" fill="#34343b" />
            <path d="M1055 424l41-8 1 3-41 8z" fill="#62626b" />

            {/* clamp ears */}
            <path d="M824 331Q800 338 792 346 782 358 786 376 790 394 813 402L833 406 838 412 852 353z" fill="url(#ear)" />
            <path d="M818 402Q800 414 794 423 788 440 796 455 805 467 823 470L840 470 842 412 833 404z" fill="url(#ear)" />
            <path d="M850 350L824 354Q804 362 802 377 804 394 816 400L833 405M797 342l4 9 26-10M786 376q2-18 14-25l35-12M790 385q0-20 14-30l34-13" />
            <path d="M827 342L850 350 843 353Q825 355 814 362L801 352z" fill="#c0c2d2" strokeWidth=".8" />
            <path d="M850 351L843 353Q812 358 804 376 803 392 813 400L833 405 838 412Q838 417 826 426 806 436 809 453 812 467 823 470L861 472 870 350z" fill="#b0b1c1" />
            <path d="M797 421l4 8 22-17M801 424l14 10M816 403l8 8 8-4M799 462q-7-20 3-33l24-18" />

            {/* clamp body */}
            <path d="M850 352Q895 354 920 330 922 355 908 378 897 398 902 410 912 425 931 442L931 453Q922 470 883 473L861 472z" fill="url(#clamp)" />
            <path d="M829 359L833 405M835 426L839 470M850 353L861 472M823 470L861 472" />
            <path d="M920 328Q930 330 929 342 926 358 911 380 897 400 901 410 915 428 934 433L931 442Q912 432 901 412 895 402 905 383 920 355 920 330z" fill="#d4d6e8" />
            <circle cx="819" cy="382" r="7" fill="#65656e" />
            <circle cx="826" cy="451" r="7" fill="#65656e" />

            {/* clamp top ring */}
            <path d="M822 333Q830 320 860 313 905 306 918 320 924 334 900 344 870 356 840 350L827 342 836 339 834 334z" fill="#c9cbdc" />
            <ellipse cx="870" cy="332" rx="36" ry="15" transform="rotate(-5 870 332)" fill="#a5a6b2" />
            <path d="M836 339Q845 324 877 323 898 324 904 332 896 344 870 347 846 347 836 339z" fill="#d08a18" />
            <ellipse cx="871" cy="336" rx="27" ry="10" transform="rotate(-4 871 336)" fill="url(#goldHole)" />
            <path d="M827 341l10-3" />

            {/* stem cap */}
            <ellipse cx="733" cy="270" rx="44" ry="19" transform="rotate(13 733 270)" fill="#8fb9e8" stroke="#4f8bc9" strokeWidth="2" />
            <ellipse cx="733" cy="267" rx="45" ry="19" transform="rotate(13 733 267)" fill="url(#cap)" strokeWidth="1.300" />
            <ellipse cx="733" cy="269" rx="37" ry="14" transform="rotate(13 733 269)" stroke="#5b93d6" strokeWidth=".8" />
            <path d="M721 251L702 268Q722 286 764 282L752 256z" fill="#f8faff" stroke="none" opacity=".7" />
            <ellipse cx="736" cy="253" rx="16" ry="6" transform="rotate(10 736 253)" fill="#99a0b0" />
            <path d="M765 278h8M771 275v7" stroke="#4f8bc9" />

            {/* pointer */}
            <path d="M879 297v15l4-3 3 6 3-1-3-6h5z" fill="#fff" stroke="#55555c" />

            {/* triad */}
            <path d="M342 620L369 626" stroke="#d98a80" />
            <path d="M344 600L341 621" stroke="#146a2c" strokeWidth="4" strokeLinecap="butt" />
            <path d="M345 593l4 10-8-1z" fill="#2fb34a" stroke="#12602a" />
            <path d="M343 585l3 4 3-4M346 589v4" stroke="#5d6d16" />
            <circle cx="340" cy="627" r="4" fill="#2323d2" stroke="#1616a0" />
            <path d="M338 633h4l-4 4h4" stroke="#5a1a9c" />

            {/* confirmation corner */}
            <path d="M1180 157l5 3 11-12" stroke="#dde8da" strokeWidth="4" strokeLinecap="butt" />
            <path d="M1227 178l-10 9 10 9" stroke="#f3d6da" strokeWidth="4" strokeLinecap="butt" />
        </svg>
    );
}

const taskTabs: { label: string; icon: ReactNode }[] = [
    { label: "Forum", icon: <Ico stroke="#3c6ea8"><path d="M1 2h12v9H5l-3 3v-3H1z" fill="#7ab2ee" /><path d="M6 7h11v8h-2v2l-3-2H6z" fill="#8fd13a" stroke="#6aa82a" /></Ico> },
    { label: "Resources", icon: <Ico stroke="#7a4c08"><path d="M3 9v8h12V9" fill="#fbe9a0" /><path d="M1 9l8-7 8 7-1 1-7-6-7 6zM13 2h2v4" fill="#efb52f" /><path d="M7 11h4v6H7z" fill="#f5c23a" /></Ico> },
    { label: "Design library", icon: <Ico stroke="#20304e"><path d="M1 9l4-2v9H1z" fill="#2fae4a" /><path d="M5 5l5-1v13H5z" fill="#f2cf3a" /><path d="M11 4l3-3 3 3v13h-6z" fill="#8aa5e6" /></Ico> },
    { label: "File explorer", icon: <Ico stroke="#94700c"><path d="M2 3h5l1 2h6v3H6l-3 8H2z" fill="#f3cb4c" /><path d="M6 8h11l-3 8H3z" fill="#fbe28a" /></Ico> },
    { label: "View palette", icon: <Ico stroke="#3a3f50"><path d="M2 1h15v11H2z" fill="#fff" /><path d="M4 3h5v3H4zM11 3h4v3h-4zM4 8h5v2H4zM11 8h4v2h-4z" fill="#f1df60" /><path d="M2 15h6M6 13l3 2-3 2" stroke="#1a2bc0" strokeWidth="2" /></Ico> },
    { label: "Appearances", icon: <Ico size={17} stroke="none"><circle cx="9" cy="9" r="8" fill="#c23030" /><path d="M9 9V1a8 8 0 0 1 7 5z" fill="#e34a3a" /><path d="M9 9L2 5a8 8 0 0 0 2 10z" fill="#4a7ddc" /><path d="M9 9l-5 6a8 8 0 0 0 8 1z" fill="#eabf30" /><path d="M9 9l7-3a8 8 0 0 1-4 10z" fill="#34a84c" /><path d="M2 5a8 8 0 0 1 7-4v8z" fill="#2f9b48" /></Ico> },
    { label: "Custom properties", icon: <PropertyIcon /> },
];

function Viewport() {
    return (
        <main className="relative min-w-0 grow overflow-hidden bg-white">
            <ModelScene />
            <FeatureTree />
            <div className="absolute top-[26px] right-[55px] rounded-lg bg-linear-to-b from-[#8383f5] via-[#0000f5] to-[#7a7af5] px-2 pt-[5px] pb-[3px] text-center font-['Liberation_Sans',sans-serif] text-[19px] leading-[22px] text-white">
                <p className="w-[110px]">Inserting the Stem Cap</p>
            </div>
            <div className="absolute top-10 right-0 flex flex-col">
                {taskTabs.map((t, i) => (
                    <button
                        key={t.label}
                        type="button"
                        aria-label={t.label}
                        className={`flex h-6 w-6 items-center justify-center rounded-l border border-r-0 border-[#77777f] ${i === 1 ? "bg-[#f3f3f7]" : "bg-[#bfc0ca]"}`}
                    >
                        {t.icon}
                    </button>
                ))}
            </div>
        </main>
    );
}

/* ---------- bottom bars ---------- */

const sheetNav = [
    { label: "First sheet", d: "M3 2v8M10 2L5 6l5 4z" },
    { label: "Previous sheet", d: "M9 2L4 6l5 4z" },
    { label: "Next sheet", d: "M4 2l5 4-5 4z" },
    { label: "Last sheet", d: "M3 2l5 4-5 4zM10 2v8" },
];

function BottomBars() {
    return (
        <>
            <div className="flex h-4 shrink-0 items-start border-t border-[#33333a] bg-[#e4e4ec] font-['Liberation_Sans',sans-serif] text-[12px] leading-[13px] text-[#1d1d22]">
                <div className="mr-[3px] ml-[2px] flex">
                    {sheetNav.map((n) => (
                        <button key={n.label} type="button" aria-label={n.label} className="flex h-[14px] w-4 items-center justify-center border border-[#9b9ba4] bg-[#b4b4bd]">
                            <svg width="12" height="12" viewBox="0 0 12 12" fill="#96969f" aria-hidden="true"><path d={n.d} stroke="#96969f" /></svg>
                        </button>
                    ))}
                </div>
                <button type="button" className="h-[14px] border-x border-b border-[#55555e] bg-[#ededf3] px-[9px] font-bold">Model</button>
                <button type="button" className="h-[14px] border-r-2 border-b-2 border-[#55555e] bg-[#c6c6d0] pr-[13px] pl-2">Motion Study 1</button>
            </div>
            <footer className="flex h-[18px] shrink-0 items-center border-t border-[#9a9aa3] bg-linear-to-b from-[#d5d5de] to-[#c2c2cd] pl-[2px] font-['Noto_Sans',sans-serif] text-[11px] text-[#26262b]">
                <span className="grow">SolidWorks Professional 2013 x64 Edition</span>
                <span className="w-[94px]">Under Defined</span>
                <span className="w-[134px]">Editing Assembly</span>
                <button type="button" className="flex w-[68px] items-center gap-2">
                    MMGS
                    <span className="rotate-180"><Caret /></span>
                </button>
                <button type="button" aria-label="Quick tips" className="flex w-[63px] items-center">
                    <Ico size={15} stroke="#1f6f5a"><path d="M2 2h14v14H2z" fill="#fff" strokeWidth="2" /><path d="M6 7c0-4 6-4 6-1 0 2-3 2-3 4M9 12v2" strokeWidth="1.500" /></Ico>
                </button>
                <button type="button" aria-label="Tags" className="mr-6">
                    <Ico size={16} stroke="#8d6a05"><path d="M2 12L11 2l5 1 1 5-10 9z" fill="#f4c322" /><circle cx="13" cy="5.500" r="1" fill="#fff" /></Ico>
                </button>
            </footer>
        </>
    );
}

export default function App() {
    return (
        <div className="h-screen w-full bg-[#232326]">
            <div className="flex h-full flex-col rounded-lg border-2 border-[#3a383b] bg-[linear-gradient(to_right,#e6e4e8_0,#e6e4e8_290px,#4a464a_297px,#3a383b_486px,#d8d4d8_496px,#f6f6f8_690px),linear-gradient(to_bottom,#f4f4f6_0%,#f4f4f6_50%,#4a4a4e_56%,#2f2e31_100%)] bg-size-[100%_6px,100%_100%] bg-no-repeat p-[6px] font-['DejaVu_Sans_Condensed','Noto_Sans',sans-serif]">
                <TitleBar />
                <Ribbon />
                <TabRow />
                <div className="flex min-h-0 grow">
                    <PropertyPanel />
                    <Viewport />
                </div>
                <BottomBars />
            </div>
        </div>
    );
}
